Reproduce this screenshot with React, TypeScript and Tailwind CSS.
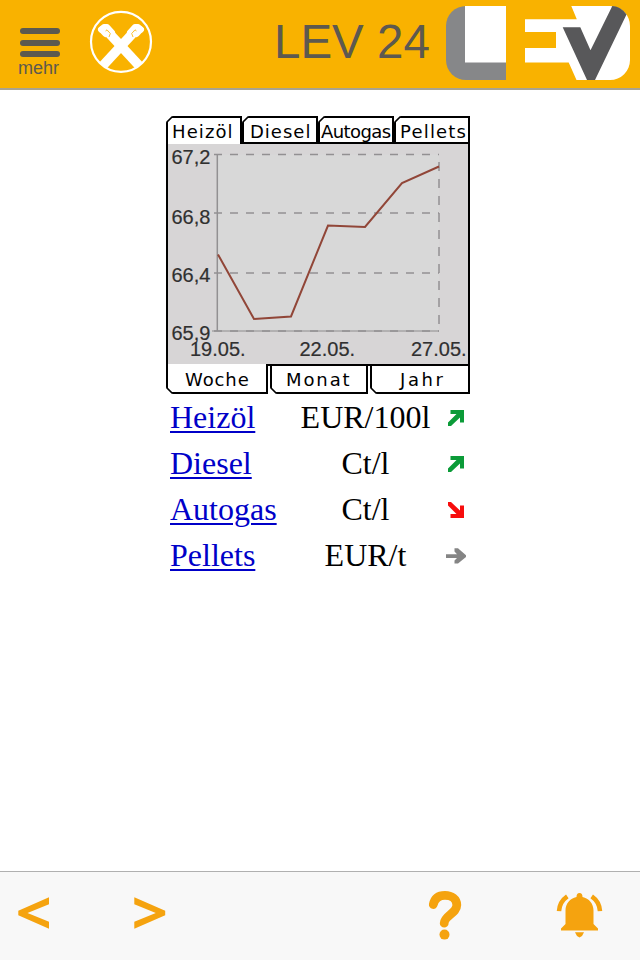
import type { ReactNode } from "react"
import clsx from "clsx"

interface Tab {
  label: string
  spacing: string
  width: string
}

interface Price {
  name: string
  unit: string
  trend: "up" | "down" | "flat"
}

const fuelTabs: Tab[] = [
  { label: "Heizöl", spacing: "tracking-[1.1px] pl-[4px]", width: "w-[76px]" },
  { label: "Diesel", spacing: "tracking-[1px] pl-[6px]", width: "w-[76px]" },
  { label: "Autogas", spacing: "tracking-[-0.6px] pl-[1px]", width: "w-[76px]" },
  { label: "Pellets", spacing: "tracking-[1.2px] pl-[4px]", width: "w-[76px]" },
]

const rangeTabs: Tab[] = [
  { label: "Woche", spacing: "tracking-[0.9px] pl-[17px]", width: "w-[102px]" },
  { label: "Monat", spacing: "tracking-[1.9px] pl-[14px]", width: "w-[98px]" },
  { label: "Jahr", spacing: "tracking-[2.6px] pl-[28px]", width: "w-[100px]" },
]

const prices: Price[] = [
  { name: "Heizöl", unit: "EUR/100l", trend: "up" },
  { name: "Diesel", unit: "Ct/l", trend: "up" },
  { name: "Autogas", unit: "Ct/l", trend: "down" },
  { name: "Pellets", unit: "EUR/t", trend: "flat" },
]

const gridY = [38.5, 97, 157, 215]
const yLabels = [
  { text: "67,2", y: 48 },
  { text: "66,8", y: 108 },
  { text: "66,4", y: 166 },
  { text: "65,9", y: 224 },
]
const xLabels = [
  { text: "19.05.", x: 24 },
  { text: "22.05.", x: 133.5 },
  { text: "27.05.", x: 245 },
]

export default function App() {
  return (
    <div className="flex h-[960px] w-[640px] flex-col overflow-hidden bg-white">
      <Header />
      <main className="flex flex-1 flex-col items-center pr-[4px] pt-[26px]">
        <section className="w-[304px]">
          <div className="flex">
            {fuelTabs.map((tab, i) => (
              <ChartTab key={tab.label} tab={tab} side="top" active={i === 0} />
            ))}
          </div>
          <PriceChart />
          <div className="flex justify-between bg-[linear-gradient(#000_0_2px,transparent_2px)]">
            {rangeTabs.map((tab, i) => (
              <ChartTab key={tab.label} tab={tab} side="bottom" active={i === 0} />
            ))}
          </div>
        </section>
        <PriceList />
      </main>
      <Footer />
    </div>
  )
}

function Header() {
  return (
    <header className="flex h-[90px] shrink-0 border-b-2 border-[#a9a391] bg-[#f9b200] font-['Liberation_Sans',sans-serif] text-[#5d594f]">
      <button className="ml-[18px] flex w-[42px] flex-col items-end pt-[28px]" aria-label="Menü">
        <span className="flex w-10 flex-col gap-[5.5px]">
          <span className="h-[6px] w-10 rounded-full bg-[#5d594f]" />
          <span className="h-[6px] w-10 rounded-full bg-[#5d594f]" />
          <span className="h-[6px] w-10 rounded-full bg-[#5d594f]" />
        </span>
        <span className="mr-[1px] mt-[1px] text-[18px] leading-5">mehr</span>
      </button>
      <GableCross />
      <h1 className="ml-[120px] mt-[15px] w-[171px] whitespace-nowrap text-[47.5px] leading-[54px]">
        LEV 24
      </h1>
      <Logo />
    </header>
  )
}

function GableCross() {
  return (
    <svg className="ml-[28px] mt-[8px] h-[68px] w-[66px]" viewBox="88 8 66 68">
      <circle cx="121" cy="41.8" r="30" fill="none" stroke="#fff" strokeWidth="2.2" />
      <g fill="none" stroke="#fff" strokeWidth="9.5">
        <path d="M103 65.500 134 32" />
        <path d="M139 65.500 108 32" />
      </g>
      <g fill="none" stroke="#fff" strokeWidth="6" strokeLinejoin="round" strokeLinecap="round">
        <path d="M101 29.500 104 27H107L112 32.500" />
        <path d="M141 29.500 138 27H135L130 32.500" />
        <path d="M101.300 29.500 105.500 34" />
        <path d="M140.700 29.500 136.500 34" />
      </g>
      <g fill="none" stroke="#f9b200" strokeWidth="0.8">
        <path d="M105.500 31 107 29.800 110.300 33.500 109 37" />
        <path d="M136.500 31 135 29.800 131.700 33.500 133 37" />
      </g>
    </svg>
  )
}

function Logo() {
  return (
    <svg className="mt-[5px] h-[76px] w-[186px] shrink-0" viewBox="445 5 186 76">
      <path d="M466 6h40v74h-40a20 20 0 0 1-20-20V26a20 20 0 0 1 20-20Z" fill="#868789" />
      <path d="M465 6h41v56.500h-41Z" fill="#fff" />
      <path
        d="M571.300 6H610a20 20 0 0 1 20 20v34a20 20 0 0 1-20 20h-33.500l-7.800-17.500H525V48h31V32h-31V19.300h51.800Z"
        fill="#fff"
      />
      <path d="M562.700 27.200h17.600l10.200 23L612.300 6c6 .5 10.700 3.300 14.200 8.500L595 80h-8Z" fill="#58585a" />
    </svg>
  )
}

function ChartTab({ tab, side, active }: { tab: Tab; side: "top" | "bottom"; active: boolean }) {
  const top = side === "top"
  return (
    <button
      className={clsx(
        "relative whitespace-nowrap border-x-2 border-black bg-white text-left font-['DejaVu_Sans',sans-serif] text-[18px] leading-[24px] text-black",
        top ? "h-[28px] border-t-2" : "h-[30px] border-b-2",
        !active && (top ? "border-b-2" : "border-t-2"),
        active ? (top ? "pb-[2px]" : "pt-[3px]") : !top && "pt-[1px]",
        tab.width,
        tab.spacing
      )}
    >
      <span className={clsx("block", top && "translate-y-[2px]")}>{tab.label}</span>
      <svg
        className={clsx("absolute -left-[2px] h-[7px] w-[7px]", top ? "-top-[2px]" : "-bottom-[2px] -scale-y-100")}
        viewBox="0 0 7 7"
      >
        <path d="M0 0h7L0 7Z" fill="#fff" />
        <path d="M1 7V6L6 1h1" fill="none" stroke="#000" strokeWidth="1.700" />
      </svg>
    </button>
  )
}

function PriceChart() {
  return (
    <svg
      className="block h-[220px] w-[304px] bg-[#d7d5d6] font-['Liberation_Sans',sans-serif]"
      viewBox="0 28 304 220"
    >
      <path d="M52 38.500H273V215H52Z" fill="#d8d8d8" />
      <g stroke="#929092" strokeWidth="1.500" fill="none">
        {gridY.map((y) => (
          <path key={y} d={`M46 ${y}H273`} strokeDasharray="8 8" strokeDashoffset="-2" />
        ))}
        <path d="M273 38V215" strokeDasharray="9 8" strokeDashoffset="9" />
        <path d="M46 215H273" strokeOpacity="0.7" />
        <path d="M51.300 38V215" />
      </g>
      <path
        d="M52 138.500 88 203l37-2.500 37-91 37 1.500 37-44 37-16.500"
        fill="none"
        stroke="#914638"
        strokeWidth="2"
      />
      <g fill="#303030" stroke="#303030" strokeWidth="0.2" fontSize="20">
        {yLabels.map((l) => (
          <text key={l.text} x="5.500" y={l.y}>
            {l.text}
          </text>
        ))}
        {xLabels.map((l) => (
          <text key={l.text} x={l.x} y="240">
            {l.text}
          </text>
        ))}
      </g>
      <path d="M1 28V248M303 28V248" stroke="#000" strokeWidth="2" />
    </svg>
  )
}

function PriceList() {
  return (
    <ul className="mt-[1px] w-[304px] font-['Liberation_Serif',serif] text-[32px] leading-[45px] text-black">
      {prices.map((p) => (
        <li key={p.name} className="flex h-[46px] items-start">
          <a
            className="ml-[4px] w-[120px] text-[#0000c8] underline decoration-2 underline-offset-[3px]"
            href="#"
          >
            {p.name}
          </a>
          <span className="w-[150px] pl-[1px] text-center">{p.unit}</span>
          <TrendIcon trend={p.trend} />
        </li>
      ))}
    </ul>
  )
}

function TrendIcon({ trend }: { trend: Price["trend"] }) {
  let shape: ReactNode
  if (trend === "flat") {
    shape = <path d="M0 8.300h11l-2.500-2.800V2.300h3.500l8 7v1.800l-8 6.500H8.500v-3l2.500-2.500H0Z" fill="#858585" />
  } else {
    shape = (
      <path
        d="M4.500 2H18v12.500h-4V9.500L5 18H2v-3.500L10.500 6h-6Z"
        fill={trend === "up" ? "#0b9b38" : "#f70d0d"}
        transform={trend === "down" ? "matrix(1 0 0 -1 0 20)" : undefined}
      />
    )
  }
  return (
    <svg className="ml-[6px] mt-[13px] h-[20px] w-[20px]" viewBox="0 0 20 20">
      {shape}
    </svg>
  )
}

function Footer() {
  return (
    <footer className="flex h-[89px] shrink-0 border-t border-[#b0b0b0] bg-[#f8f8f8] text-[#f5a30f]">
      <svg className="ml-[18px] mt-[25px] h-[32px] w-[32px]" viewBox="0 0 32 32" fill="currentColor">
        <path d="M31 .3v7L9.500 16 31 24.800v7L.3 18.300v-4.600Z" />
      </svg>
      <svg className="ml-[84px] mt-[25px] h-[32px] w-[32px]" viewBox="0 0 32 32" fill="currentColor">
        <path d="M.3.300v7L21.800 16 .3 24.800v7L31.200 18.300v-4.600Z" />
      </svg>
      <svg className="ml-[262px] mt-[18px] h-[52px] w-[34px]" viewBox="428 890 34 52">
        <path
          d="M433.300 904.500C434.500 898.500 438.500 895.300 445 895.300S456.800 899 456.800 905C456.800 913.500 444.200 915.500 444.200 923.200"
          fill="none"
          stroke="currentColor"
          strokeWidth="8.800"
          strokeLinecap="round"
        />
        <circle cx="444.500" cy="934.600" r="5" fill="currentColor" />
      </svg>
      <svg className="ml-[93px] mt-[18px] h-[52px] w-[50px]" viewBox="555 890 50 52" fill="currentColor">
        <path d="M576.500 897c0-2.500 1-4 3-4s3 1.500 3 4c6.500 1.500 11 6.500 11 13.500v13.500l4.500 4.500v2h-37v-2l4.500-4.500v-13.500c0-7 4.500-12 11-13.500Z" />
        <path d="M575 932.200h9l-2 3.800-2.500 1.500-2.500-1.500Z" />
        <path
          d="M559 911.200C559.300 905 562 900 567.300 896.300M600 911.200C599.700 905 597 900 591.700 896.300"
          fill="none"
          stroke="currentColor"
          strokeWidth="4.500"
        />
      </svg>
    </footer>
  )
}
